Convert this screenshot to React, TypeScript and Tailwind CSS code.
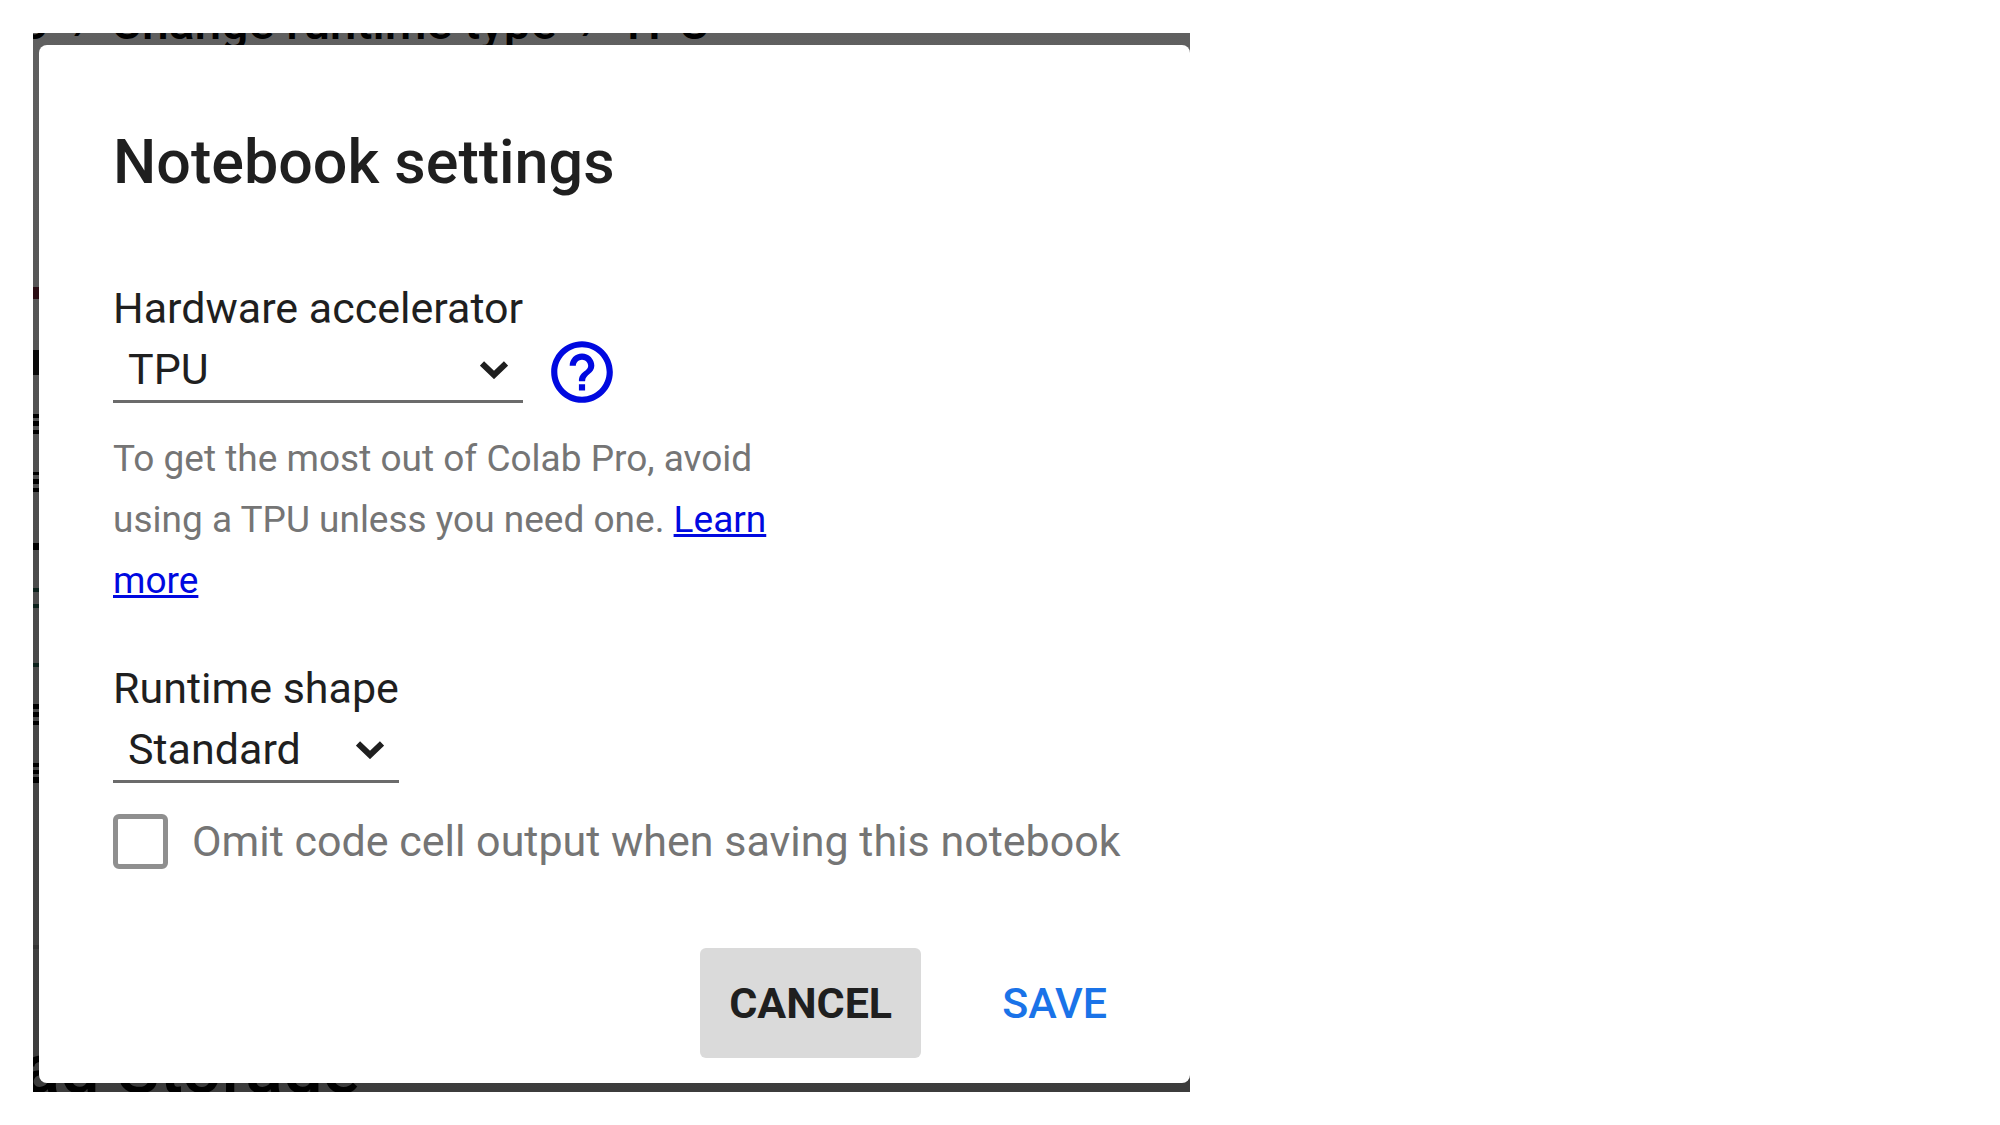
import { useId, type ReactNode } from "react";
import { MdHelpOutline } from "react-icons/md";

const marks = [
  { top: 254, height: 12, className: "bg-[#2a0d14]" },
  { top: 317, height: 25, className: "bg-[#0a0a0a]" },
  { top: 381, height: 4, className: "bg-black" },
  { top: 388, height: 5, className: "bg-black" },
  { top: 397, height: 4, className: "bg-black" },
  { top: 439, height: 3, className: "bg-black" },
  { top: 446, height: 5, className: "bg-black" },
  { top: 455, height: 4, className: "bg-black" },
  { top: 510, height: 7, className: "bg-black" },
  { top: 555, height: 4, className: "bg-[#0c211b]" },
  { top: 571, height: 4, className: "bg-[#0c211b]" },
  { top: 630, height: 4, className: "bg-[#0c211b]" },
  { top: 671, height: 5, className: "bg-black" },
  { top: 679, height: 5, className: "bg-black" },
  { top: 688, height: 4, className: "bg-black" },
  { top: 730, height: 4, className: "bg-black" },
  { top: 737, height: 4, className: "bg-black" },
  { top: 744, height: 6, className: "bg-black" },
  { top: 912, height: 4, className: "bg-[#343434]" },
];

function Field({
  label,
  options,
  children,
}: {
  label: string;
  options: string[];
  children?: ReactNode;
}) {
  const id = useId();
  return (
    <div className="flex items-end gap-[22px]">
      <div>
        <label htmlFor={id} className="block text-[43px] leading-[61px]">
          {label}
        </label>
        <div className="relative">
          <select
            id={id}
            className="block h-16 w-full appearance-none rounded-none border-b-[3px] border-[#6b6b6b] bg-transparent px-[15px] text-[43px] leading-[61px] outline-none"
          >
            {options.map((o) => (
              <option key={o}>{o}</option>
            ))}
          </select>
          <svg
            viewBox="0 0 28 18"
            className="pointer-events-none absolute top-[22px] right-[15px] h-[18px] w-7"
            fill="none"
            stroke="currentColor"
            strokeWidth="6"
          >
            <path d="M2 2.5 14 14 26 2.5" />
          </svg>
        </div>
      </div>
      {children}
    </div>
  );
}

export default function App() {
  return (
    <main className="min-h-screen bg-white p-[33px] font-['Roboto',sans-serif] text-[#1f1f1f]">
      <div className="relative w-full max-w-[1157px] overflow-hidden bg-linear-to-b from-[#606060] via-[#4c4c4c] to-[#3c3c3c] pt-3 pb-[9px] pl-1.5">
        <div aria-hidden="true" className="absolute inset-0 text-black">
          <div className="absolute -top-[37px] -left-[12px] flex gap-6 text-[48px] leading-[54px] font-medium whitespace-nowrap">
            <span>o</span>
            <span>›</span>
            <span>Change runtime type</span>
            <span>›</span>
            <span>TPU</span>
          </div>
          {marks.map((m) => (
            <div
              key={m.top}
              className={`absolute left-0 w-1.5 ${m.className}`}
              style={{ top: m.top, height: m.height }}
            />
          ))}
          <div className="absolute -bottom-[16px] left-[-88px] text-[70px] leading-[78px] font-medium whitespace-nowrap">
            Load Storage
          </div>
        </div>

        <section
          role="dialog"
          aria-labelledby="dialog-title"
          className="relative rounded-lg bg-white pt-[77px] pr-[58px] pb-[25px] pl-[74px]"
        >
          <h1 id="dialog-title" className="text-[61px] leading-[80px] font-medium">
            Notebook settings
          </h1>

          <form className="mt-[76px]" onSubmit={(e) => e.preventDefault()}>
            <Field label="Hardware accelerator" options={["TPU", "GPU", "None"]}>
              <a href="#help" aria-label="Hardware accelerator help" className="-mb-1.5 text-[#0009e0]">
                <MdHelpOutline className="size-[74px]" />
              </a>
            </Field>

            <p className="mt-[25px] max-w-[660px] text-[37px] leading-[61px] text-[#757575]">
              To get the most out of Colab Pro, avoid using a TPU unless you need one.{" "}
              <a href="#learn-more" className="text-[#0009e0] underline">
                Learn more
              </a>
            </p>

            <div className="mt-[47px]">
              <Field label="Runtime shape" options={["Standard", "High-RAM"]} />
            </div>

            <label className="mt-[30px] flex h-14 items-center gap-6 text-[43px] leading-[56px] whitespace-nowrap text-[#757575]">
              <input
                type="checkbox"
                className="size-[55px] shrink-0 appearance-none rounded-md border-[5px] border-[#8f8f8f] bg-white"
              />
              Omit code cell output when saving this notebook
            </label>

            <div className="mt-[79px] -mr-1 flex justify-end gap-[52px] text-[43px]">
              <button type="button" className="h-[110px] rounded-md bg-[#dadada] px-[29px] font-bold">
                CANCEL
              </button>
              <button type="submit" className="h-[110px] rounded-md px-[29px] font-medium text-[#1a73e8]">
                SAVE
              </button>
            </div>
          </form>
        </section>
      </div>
    </main>
  );
}
